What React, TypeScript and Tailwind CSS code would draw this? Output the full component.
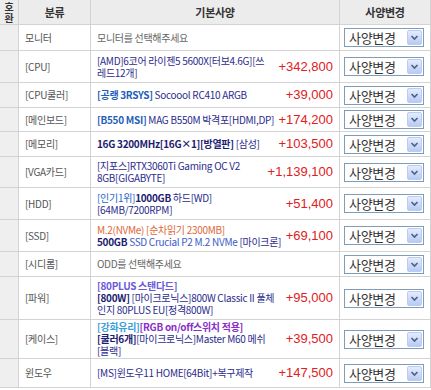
import React from "react";

const NAVY = "text-[#2c2c8c]";

type Row = {
  label: string;
  h: string;
  price?: string;
  content: React.ReactNode;
};

const B = ({ c, children }: { c: string; children: React.ReactNode }) => (
  <span className={`font-bold ${c}`}>{children}</span>
);

const rows: Row[] = [
  {
    label: "모니터",
    h: "h-[26px]",
    content: <div className="text-[#666]">모니터를 선택해주세요</div>,
  },
  {
    label: "[CPU]",
    h: "h-[32px]",
    price: "+342,800",
    content: (
      <>
        <div>[AMD]6코어 라이젠5 5600X[터보4.6G][쓰</div>
        <div>레드12개]</div>
      </>
    ),
  },
  {
    label: "[CPU쿨러]",
    h: "h-[25px]",
    price: "+39,000",
    content: (
      <div>
        <B c="text-[#1f5fb8]">[공랭 3RSYS]</B> Socoool RC410 ARGB
      </div>
    ),
  },
  {
    label: "[메인보드]",
    h: "h-[24px]",
    price: "+174,200",
    content: (
      <div>
        <B c="text-[#1f5fb8]">[B550 MSI]</B> MAG B550M 박격포[HDMI,DP]
      </div>
    ),
  },
  {
    label: "[메모리]",
    h: "h-[25px]",
    price: "+103,500",
    content: (
      <div>
        <B c="text-[#1c1c70]">16G 3200MHz[16G×1][방열판]</B> [삼성]
      </div>
    ),
  },
  {
    label: "[VGA카드]",
    h: "h-[31px]",
    price: "+1,139,100",
    content: (
      <>
        <div>[지포스]RTX3060Ti Gaming OC V2</div>
        <div>8GB[GIGABYTE]</div>
      </>
    ),
  },
  {
    label: "[HDD]",
    h: "h-[32px]",
    price: "+51,400",
    content: (
      <>
        <div>
          <span className="text-[#2466c8]">[인기1위]</span>
          <B c="text-[#1c1c70]">1000GB</B> 하드[WD]
        </div>
        <div>[64MB/7200RPM]</div>
      </>
    ),
  },
  {
    label: "[SSD]",
    h: "h-[32px]",
    price: "+69,100",
    content: (
      <>
        <div className="text-[#e0683a]">M.2(NVMe) [순차읽기 2300MB]</div>
        <div>
          <B c="text-[#1c1c70]">500GB</B>
          <span className="text-[#3a5cc8]"> SSD Crucial P2 M.2 NVMe</span> [마이크론]
        </div>
      </>
    ),
  },
  {
    label: "[시디롬]",
    h: "h-[25px]",
    content: <div className="text-[#666]">ODD를 선택해주세요</div>,
  },
  {
    label: "[파워]",
    h: "h-[43px]",
    price: "+95,000",
    content: (
      <>
        <div>
          <B c="text-[#6a5ad8]">[80PLUS 스탠다드]</B>
        </div>
        <div>
          <B c="text-[#1c1c70]">[800W]</B> [마이크로닉스]800W Classic II 풀체
        </div>
        <div>인지 80PLUS EU[정격800W]</div>
      </>
    ),
  },
  {
    label: "[케이스]",
    h: "h-[39px]",
    price: "+39,500",
    content: (
      <>
        <div>
          <B c="text-[#3aa0d8]">[강화유리]</B>
          <B c="text-[#8a2fc8]">[RGB on/off스위치 적용]</B>
        </div>
        <div>
          <B c="text-[#1c1c70]">[쿨러6개]</B>[마이크로닉스]Master M60 메쉬
        </div>
        <div>[블랙]</div>
      </>
    ),
  },
  {
    label: "윈도우",
    h: "h-[29px]",
    price: "+147,500",
    content: <div>[MS]윈도우11 HOME[64Bit]+복구제작</div>,
  },
];

function Select() {
  return (
    <div className="flex h-[19px] w-[80px] items-center border border-[#7f9db9] bg-white">
      <span className="flex-1 pl-[4px] text-[13px] leading-[17px] text-[#333]">사양변경</span>
      <span className="mr-[1px] flex h-[15px] w-[15px] items-center justify-center rounded-[2px] border border-[#bccbf0] bg-gradient-to-b from-[#e4ecfd] to-[#b8cbf4]">
        <svg width="9" height="7" viewBox="0 0 9 7">
          <path d="M1.5 2 L4.5 5 L7.5 2" fill="none" stroke="#4d6185" strokeWidth="1.6" />
        </svg>
      </span>
    </div>
  );
}

const cell = "border-r border-b border-[#d3d3d3]";

export default function App() {
  return (
    <div
      className="w-[431px] bg-white text-[10px] leading-[12px] tracking-[-0.3px]"
      style={{ fontFamily: '"Noto Sans CJK KR", "Noto Sans", sans-serif' }}
    >
      <div className="grid h-[25px] grid-cols-[19px_72px_249px_91px] bg-[#ececec] font-bold text-[#333]">
        <div className={`${cell} flex flex-col items-center justify-center overflow-hidden text-[10px] leading-[11px]`}>
          <span>호</span>
          <span>환</span>
        </div>
        <div className={`${cell} flex items-center justify-center text-[11px]`}>분류</div>
        <div className={`${cell} flex items-center justify-center text-[11px]`}>기본사양</div>
        <div className={`${cell} flex items-center justify-center text-[11px]`}>사양변경</div>
      </div>
      {rows.map((r, i) => (
        <div key={i} className={`grid grid-cols-[19px_72px_249px_91px] ${r.h}`}>
          <div className={`${cell} bg-[#efefef]`} />
          <div className={`${cell} flex items-center pl-[6px] text-[#555]`}>{r.label}</div>
          <div className={`${cell} flex items-center justify-between pl-[6px] pr-[6px]`}>
            <div className={`whitespace-nowrap ${NAVY}`}>{r.content}</div>
            {r.price && (
              <div
                className="text-[13px] tracking-normal text-[#e0201c]"
                style={{ fontFamily: '"Liberation Sans", Arial, sans-serif' }}
              >
                {r.price}
              </div>
            )}
          </div>
          <div className={`${cell} flex items-center pl-[4px]`}>
            <Select />
          </div>
        </div>
      ))}
    </div>
  );
}
